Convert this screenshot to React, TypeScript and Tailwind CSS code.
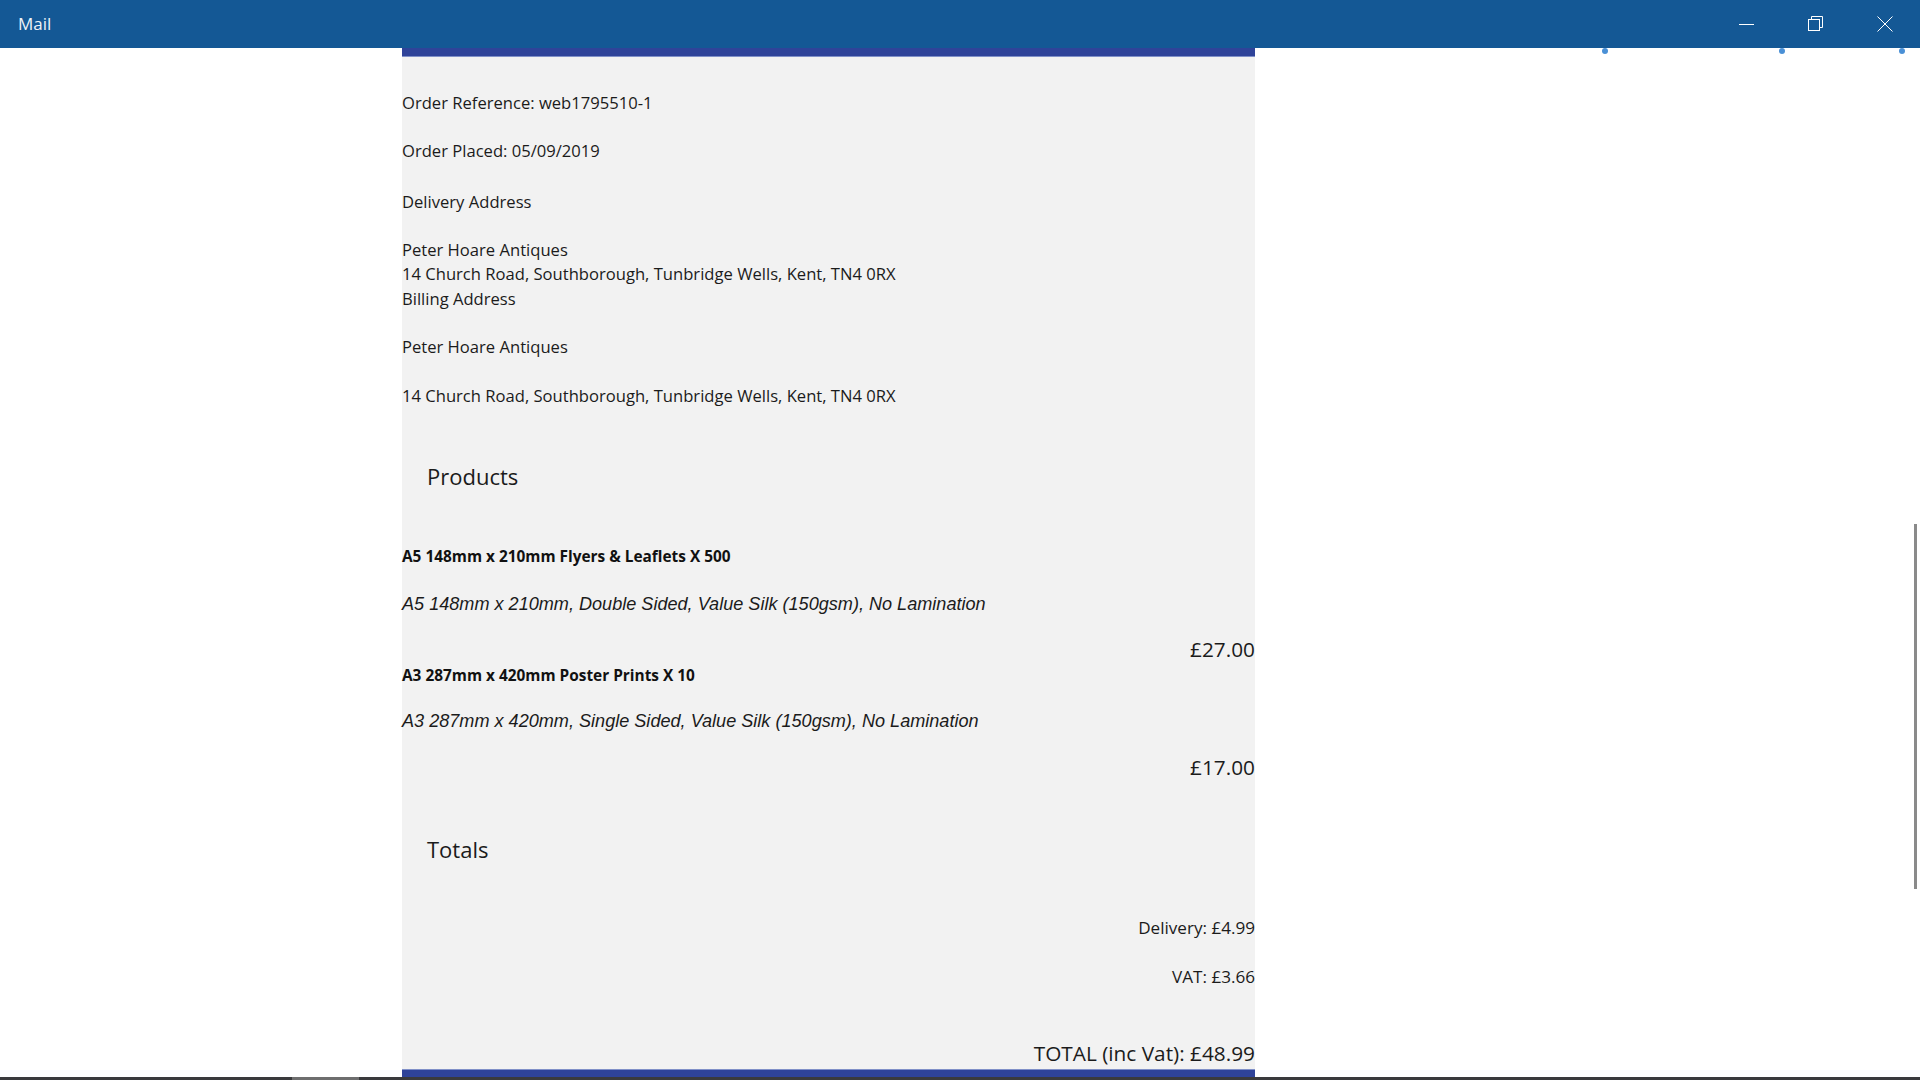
import React from "react";

const body = "font-['Open_Sans',sans-serif] text-[16.6px] text-[#1b1b1b]";
const ital = "font-['Liberation_Sans',Arial,sans-serif] italic text-[18.1px] text-[#1b1b1b]";
const bold = "font-['Open_Sans',sans-serif] font-bold text-[15.4px] text-[#111]";
const right = "font-['Open_Sans',sans-serif] text-[17.1px] text-[#1b1b1b]";
const big = "font-['Open_Sans',sans-serif] text-[20.8px] text-[#1b1b1b]";

export default function App() {
  return (
    <div className="relative w-[1920px] h-[1080px] overflow-hidden bg-white flex flex-col">
      {/* Title bar */}
      <div className="h-[48px] shrink-0 bg-[#145895] flex items-center justify-between">
        <div className="pl-[18px] font-['Open_Sans',sans-serif] text-[17px] text-[#eef3f8]">Mail</div>
        <div className="flex h-full mr-px">
          <div className="w-[69px] h-full flex items-center justify-center">
            <div className="w-[15px] h-px bg-white" />
          </div>
          <div className="w-[69px] h-full flex items-center justify-center">
            <svg width="16" height="16" viewBox="0 0 16 16" fill="none" stroke="white" strokeWidth="1">
              <rect x="0.5" y="3.5" width="11" height="11" />
              <path d="M3.5 3.5V0.5H14.5V11.5H11.5" />
            </svg>
          </div>
          <div className="w-[69px] h-full flex items-center justify-center">
            <svg width="16" height="16" viewBox="0 0 16 16" fill="none" stroke="white" strokeWidth="1">
              <path d="M0.5 0.5L15.5 15.5M15.5 0.5L0.5 15.5" />
            </svg>
          </div>
        </div>
      </div>

      {/* Content */}
      <div className="relative flex-1 flex flex-col">
        <div className="ml-[402px] w-[853px] flex-1 bg-[#f2f2f2] flex flex-col">
          <div className="h-[9px] bg-[#2f4399] border-b border-[#8090c8]" />
          <div className="flex flex-col">
            <div className={`${body} h-[24px] leading-[24px] mt-[34px]`}>Order Reference: web1795510-1</div>
            <div className={`${body} h-[24px] leading-[24px] mt-[24px]`}>Order Placed: 05/09/2019</div>
            <div className={`${body} h-[24px] leading-[24px] mt-[27px]`}>Delivery Address</div>
            <div className={`${body} h-[24px] leading-[24px] mt-[24px]`}>Peter Hoare Antiques</div>
            <div className={`${body} h-[24px] leading-[24px]`}>14 Church Road, Southborough, Tunbridge Wells, Kent, TN4 0RX</div>
            <div className={`${body} h-[24px] leading-[24px] mt-px`}>Billing Address</div>
            <div className={`${body} h-[24px] leading-[24px] mt-[24px]`}>Peter Hoare Antiques</div>
            <div className={`${body} h-[24px] leading-[24px] mt-[25px]`}>14 Church Road, Southborough, Tunbridge Wells, Kent, TN4 0RX</div>

            <div className="font-['Open_Sans',sans-serif] text-[22px] text-[#1b1b1b] h-[32px] leading-[32px] mt-[52px] pl-[25px]">Products</div>

            <div className={`${bold} h-[24px] leading-[24px] mt-[53px]`}>A5 148mm x 210mm Flyers &amp; Leaflets X 500</div>
            <div className={`${ital} h-[24px] leading-[24px] mt-[23px]`}>A5 148mm x 210mm, Double Sided, Value Silk (150gsm), No Lamination</div>
            <div className={`${big} h-[28px] leading-[28px] mt-[19px] text-right`}>£27.00</div>

            <div className={`${bold} h-[24px] leading-[24px] mt-px`}>A3 287mm x 420mm Poster Prints X 10</div>
            <div className={`${ital} h-[24px] leading-[24px] mt-[21px]`}>A3 287mm x 420mm, Single Sided, Value Silk (150gsm), No Lamination</div>
            <div className={`${big} h-[28px] leading-[28px] mt-[20px] text-right`}>£17.00</div>

            <div className="font-['Open_Sans',sans-serif] text-[22px] text-[#1b1b1b] h-[32px] leading-[32px] mt-[52px] pl-[25px]">Totals</div>

            <div className={`${right} h-[24px] leading-[24px] mt-[51px] text-right`}>Delivery: £4.99</div>
            <div className={`${right} h-[24px] leading-[24px] mt-[25px] text-right`}>VAT: £3.66</div>
            <div className={`${big} h-[28px] leading-[28px] mt-[50px] text-right`}>TOTAL (inc Vat): £48.99</div>
            <div className="h-[9px] mt-[2px] bg-[#2f4399] border-t border-[#8090c8]" />
          </div>
        </div>

        {/* bottom dark line */}
        <div className="absolute left-0 right-0 bottom-0 h-[3px] bg-[#3a3a3c] flex">
          <div className="ml-[292px] w-[67px] h-full bg-[#6e6e6e]" />
        </div>

        {/* dots */}
        <div className="absolute top-0 left-[1602px] w-[6px] h-[6px] rounded-full bg-[#4a90d6]" />
        <div className="absolute top-0 left-[1779px] w-[6px] h-[6px] rounded-full bg-[#4a90d6]" />
        <div className="absolute top-0 left-[1899px] w-[6px] h-[6px] rounded-full bg-[#4a90d6]" />

        {/* scrollbar */}
        <div className="absolute left-[1914px] top-[476px] w-[3px] h-[365px] bg-[#8a8a8a]" />
      </div>
    </div>
  );
}
